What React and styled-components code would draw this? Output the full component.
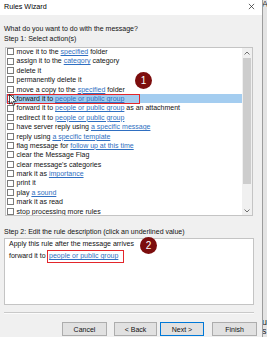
import React from "react";
import styled, { createGlobalStyle } from "styled-components";

const GlobalStyle = createGlobalStyle`
  html, body {
    margin: 0;
    padding: 0;
  }
  body {
    width: 267px;
    height: 337px;
    overflow: hidden;
    background: #f0f0f0;
    font-family: "Liberation Sans", Arial, sans-serif;
    color: #000;
  }
`;

const actions = [
  { before: "move it to the ", link: "specified", after: " folder" },
  { before: "assign it to the ", link: "category", after: " category" },
  { before: "delete it" },
  { before: "permanently delete it" },
  { before: "move a copy to the ", link: "specified", after: " folder" },
  { before: "forward it to ", link: "people or public group", selected: true },
  { before: "forward it to ", link: "people or public group", after: " as an attachment" },
  { before: "redirect it to ", link: "people or public group" },
  { before: "have server reply using ", link: "a specific message" },
  { before: "reply using ", link: "a specific template" },
  { before: "flag message for ", link: "follow up at this time" },
  { before: "clear the Message Flag" },
  { before: "clear message's categories" },
  { before: "mark it as ", link: "importance" },
  { before: "print it" },
  { before: "play ", link: "a sound" },
  { before: "mark it as read" },
  { before: "stop processing more rules" },
];

const App = () => {
  return (
    <>
      <GlobalStyle />
      <Page>
        <Dialog>
          <TitleBar>
            <Title>Rules Wizard</Title>
            <CloseIcon viewBox="0 0 8 8">
              <path d="M1 1 L7 7 M7 1 L1 7" stroke="#222" strokeWidth="0.8" />
            </CloseIcon>
          </TitleBar>

          <Body>
            <Label>What do you want to do with the message?</Label>
            <Label>Step 1: Select action(s)</Label>

            <ListBox>
              <Rows>
                {actions.map((a, i) => (
                  <Row key={i} selected={a.selected}>
                    <Check />
                    <span>
                      {a.before}
                      {a.link && <Link>{a.link}</Link>}
                      {a.after}
                    </span>
                  </Row>
                ))}
              </Rows>

              <ScrollBar>
                <ScrollArrow>
                  <svg width="6" height="4" viewBox="0 0 6 4">
                    <path d="M0.5 3.5 L3 1 L5.5 3.5" fill="none" stroke="#606060" strokeWidth="0.9" />
                  </svg>
                </ScrollArrow>
                <Thumb />
                <Track />
                <ScrollArrow>
                  <svg width="6" height="4" viewBox="0 0 6 4">
                    <path d="M0.5 0.5 L3 3 L5.5 0.5" fill="none" stroke="#606060" strokeWidth="0.9" />
                  </svg>
                </ScrollArrow>
              </ScrollBar>
            </ListBox>

            <StepTwoLabel>Step 2: Edit the rule description (click an underlined value)</StepTwoLabel>

            <Description>
              <DescLine>Apply this rule after the message arrives</DescLine>
              <DescLine>
                forward it to<Outlined><Link>people or public group</Link></Outlined>
              </DescLine>
            </Description>

            <Separator />

            <ButtonRow>
              <Button width={45} gap={7}>Cancel</Button>
              <Button width={43} gap={3}>&lt; Back</Button>
              <Button width={44} gap={8} primary>Next &gt;</Button>
              <Button width={45}>Finish</Button>
            </ButtonRow>
          </Body>

          <Highlight />
          <Cursor viewBox="0 0 8 12">
            <path d="M0.5 0.5 L0.5 10 L2.8 7.8 L4.4 11.4 L5.8 10.8 L4.3 7.3 L7.3 7.3 Z" fill="#fff" stroke="#000" strokeWidth="0.7" />
          </Cursor>
          <Badge top={72} left={135}>1</Badge>
          <Badge top={237} left={140}>2</Badge>
        </Dialog>

        <SideStrip>
          <SideText>A</SideText>
          <SideBottom>
            <SideText>u</SideText>
            <SideText>s</SideText>
          </SideBottom>
        </SideStrip>
      </Page>
    </>
  );
};

// styled components
const Page = styled.div`
  display: flex;
  width: 267px;
  height: 337px;
  overflow: hidden;
`;

const Dialog = styled.div`
  position: relative;
  width: 262px;
  flex-shrink: 0;
  display: flex;
  flex-direction: column;
  background: #f0f0f0;
`;

const TitleBar = styled.div`
  height: 15px;
  background: #ffffff;
  display: flex;
  align-items: flex-start;
  justify-content: space-between;
  padding: 2px 7px 0 4px;
  box-sizing: border-box;
`;

const Title = styled.div`
  font-size: 7.2px;
  line-height: 9px;
  color: #000;
`;

const CloseIcon = styled.svg`
  width: 7px;
  height: 7px;
  margin-top: 1px;
`;

const Body = styled.div`
  padding: 9px 8px 0 4px;
  display: flex;
  flex-direction: column;
  font-size: 7px;
  color: #111;
`;

const Label = styled.div`
  line-height: 10px;
  white-space: nowrap;
`;

const ListBox = styled.div`
  margin: 3px 1px 0 1px;
  height: 169px;
  box-sizing: border-box;
  border: 1px solid #c4c4c4;
  background: #ffffff;
  display: grid;
  grid-template-columns: 1fr 10px;
  overflow: hidden;
`;

const Rows = styled.div`
  display: flex;
  flex-direction: column;
  margin-top: -1px;
`;

const Row = styled.div`
  height: 9.4px;
  display: flex;
  align-items: center;
  gap: 2.6px;
  padding-left: 1px;
  white-space: nowrap;
  line-height: 9.4px;
  background: ${(p) => (p.selected ? "#a4cdf0" : "transparent")};
`;

const Check = styled.span`
  width: 7px;
  height: 7px;
  box-sizing: border-box;
  border: 1px solid #7a7a7a;
  background: #fff;
  flex-shrink: 0;
`;

const Link = styled.span`
  color: #2f6fc1;
  text-decoration: underline;
  text-decoration-thickness: 0.6px;
  text-underline-offset: 1px;
`;

const ScrollBar = styled.div`
  display: flex;
  flex-direction: column;
  background: #f0f0f0;
`;

const ScrollArrow = styled.div`
  height: 10px;
  display: flex;
  align-items: center;
  justify-content: center;
`;

const Thumb = styled.div`
  height: 126px;
  margin: 0 1px;
  background: #cdcdcd;
`;

const Track = styled.div`
  flex: 1;
`;

const StepTwoLabel = styled(Label)`
  margin-top: 10.5px;
`;

const Description = styled.div`
  margin-top: 1.5px;
  height: 67px;
  box-sizing: border-box;
  border: 1px solid #c4c4c4;
  background: #ffffff;
  padding: 0 4px;
  display: flex;
  flex-direction: column;
`;

const DescLine = styled.div`
  line-height: 10px;
  white-space: nowrap;
`;

const Outlined = styled.span`
  display: inline-block;
  line-height: 9.5px;
  border: 1.3px solid #e3262b;
  padding: 0.5px 5px 1px 1.5px;
  margin-left: 1px;
  margin-top: 0.5px;
`;

const Separator = styled.div`
  margin-top: 6.5px;
  height: 0;
  border-top: 1px solid #c9c9c9;
  border-bottom: 1px solid #fbfbfb;
`;

const ButtonRow = styled.div`
  margin-top: 8.5px;
  margin-right: -3px;
  display: flex;
  justify-content: flex-end;
`;

const Button = styled.div`
  width: ${(p) => p.width}px;
  margin-right: ${(p) => p.gap || 0}px;
  height: 14px;
  box-sizing: border-box;
  border: ${(p) => (p.primary ? "1.3px solid #0078d7" : "1px solid #adadad")};
  background: #e1e1e1;
  display: flex;
  align-items: center;
  justify-content: center;
  font-size: 7px;
  white-space: nowrap;
`;

const Highlight = styled.div`
  position: absolute;
  left: 6.5px;
  top: 93.5px;
  width: 133px;
  height: 10.5px;
  box-sizing: border-box;
  border: 1.3px solid #e3262b;
`;

const Cursor = styled.svg`
  position: absolute;
  left: 9px;
  top: 94px;
  width: 8px;
  height: 12px;
`;

const Badge = styled.div`
  position: absolute;
  top: ${(p) => p.top}px;
  left: ${(p) => p.left}px;
  width: 17px;
  height: 17px;
  border-radius: 50%;
  background: #7c0d0d;
  color: #ffffff;
  font-family: "Liberation Sans", Arial, sans-serif;
  font-size: 10px;
  display: flex;
  align-items: center;
  justify-content: center;
`;

const SideStrip = styled.div`
  flex: 1;
  border-left: 1px solid #9c9c9c;
  background: #e4e4e4;
  display: flex;
  flex-direction: column;
  justify-content: space-between;
  overflow: hidden;
  font-size: 9px;
  line-height: 9px;
`;

const SideText = styled.div`
  margin-left: -1px;
  color: #222;
`;

const SideBottom = styled.div`
  padding-bottom: 1px;
`;

export default App;
